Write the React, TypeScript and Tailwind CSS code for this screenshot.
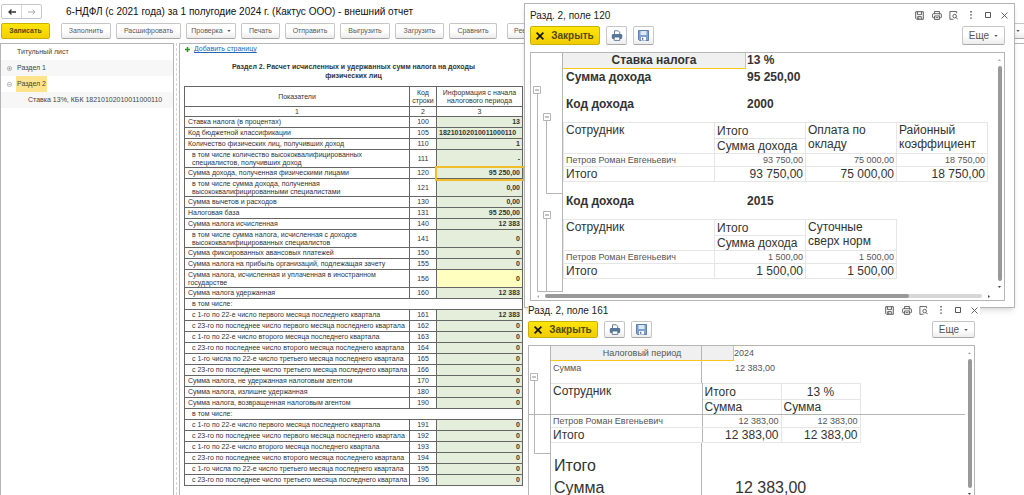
import type { ReactNode } from 'react';
import clsx from 'clsx';

type Tone = 'green' | 'yellow';

interface ReportRow {
  label: string;
  code?: string;
  value?: string;
  indent?: boolean;
  tall?: boolean;
  tone?: Tone;
  selected?: boolean;
}

const reportRows: ReportRow[] = [
  { label: 'Ставка налога (в процентах)', code: '100', value: '13' },
  { label: 'Код бюджетной классификации', code: '105', value: '18210102010011000110' },
  { label: 'Количество физических лиц, получивших доход', code: '110', value: '1' },
  { label: 'в том числе количество высококвалифицированных специалистов, получивших доход', code: '111', value: '-', indent: true, tall: true },
  { label: 'Сумма дохода, полученная физическими лицами', code: '120', value: '95 250,00', selected: true },
  { label: 'в том числе сумма дохода, полученная высококвалифицированными специалистами', code: '121', value: '0,00', indent: true, tall: true },
  { label: 'Сумма вычетов и расходов', code: '130', value: '0,00' },
  { label: 'Налоговая база', code: '131', value: '95 250,00' },
  { label: 'Сумма налога исчисленная', code: '140', value: '12 383' },
  { label: 'в том числе сумма налога, исчисленная с доходов высококвалифицированных специалистов', code: '141', value: '0', indent: true, tall: true },
  { label: 'Сумма фиксированных авансовых платежей', code: '150', value: '0' },
  { label: 'Сумма налога на прибыль организаций, подлежащая зачету', code: '155', value: '0' },
  { label: 'Сумма налога, исчисленная и уплаченная в иностранном государстве', code: '156', value: '0', tall: true, tone: 'yellow' },
  { label: 'Сумма налога удержанная', code: '160', value: '12 383' },
  { label: 'в том числе:', indent: true },
  { label: 'с 1-го по 22-е число первого месяца последнего квартала', code: '161', value: '12 383', indent: true },
  { label: 'с 23-го по последнее число первого месяца последнего квартала', code: '162', value: '0', indent: true },
  { label: 'с 1-го по 22-е число второго месяца последнего квартала', code: '163', value: '0', indent: true },
  { label: 'с 23-го по последнее число второго месяца последнего квартала', code: '164', value: '0', indent: true },
  { label: 'с 1-го числа по 22-е число третьего месяца последнего квартала', code: '165', value: '0', indent: true },
  { label: 'с 23-го по последнее число третьего месяца последнего квартала', code: '166', value: '0', indent: true },
  { label: 'Сумма налога, не удержанная налоговым агентом', code: '170', value: '0' },
  { label: 'Сумма налога, излишне удержанная', code: '180', value: '0' },
  { label: 'Сумма налога, возвращенная налоговым агентом', code: '190', value: '0' },
  { label: 'в том числе:', indent: true },
  { label: 'с 1-го по 22-е число первого месяца последнего квартала', code: '191', value: '0', indent: true },
  { label: 'с 23-го по последнее число первого месяца последнего квартала', code: '192', value: '0', indent: true },
  { label: 'с 1-го по 22-е число второго месяца последнего квартала', code: '193', value: '0', indent: true },
  { label: 'с 23-го по последнее число второго месяца последнего квартала', code: '194', value: '0', indent: true },
  { label: 'с 1-го числа по 22-е число третьего месяца последнего квартала', code: '195', value: '0', indent: true },
  { label: 'с 23-го по последнее число третьего месяца последнего квартала', code: '196', value: '0', indent: true },
];

const plainButton =
  'flex shrink-0 items-center justify-center rounded-xs border border-[#c6c6c6] border-b-[#a8a8a8] bg-linear-to-b from-white from-50% to-[#ececec] text-[#555]';

function Caret() {
  return (
    <svg viewBox="0 0 5 3" className="h-0.5 w-1 shrink-0" fill="#555">
      <path d="M0 0h5L2.5 3z" />
    </svg>
  );
}

function ToolButton({ children, className }: { children: ReactNode; className?: string }) {
  return <button className={clsx(plainButton, 'h-4 gap-1 text-[7px]', className)}>{children}</button>;
}

function Toolbar() {
  return (
    <div className="flex gap-[5px] overflow-hidden pt-1 pb-1 pl-px">
      <button className="mr-1.5 h-4 w-[49px] shrink-0 rounded-xs border border-[#c9b100] bg-linear-to-b from-[#ffe60a] to-[#f2cf00] text-[7px] font-bold text-[#554a00]">
        Записать
      </button>
      <ToolButton className="w-[50px]">Заполнить</ToolButton>
      <ToolButton className="w-[65px]">Расшифровать</ToolButton>
      <ToolButton className="w-[50px]">
        Проверка <Caret />
      </ToolButton>
      <ToolButton className="w-[39px]">Печать</ToolButton>
      <ToolButton className="w-[50px]">Отправить</ToolButton>
      <ToolButton className="w-[50px]">Выгрузить</ToolButton>
      <ToolButton className="w-[49px]">Загрузить</ToolButton>
      <ToolButton className="w-[48px]">Сравнить</ToolButton>
      <ToolButton className="ml-[5px] w-[42px]">Реестры</ToolButton>
      <ToolButton className="-mr-1 ml-auto w-[38px]">
        Еще <Caret />
      </ToolButton>
    </div>
  );
}

function Expander({ open }: { open: boolean }) {
  return (
    <svg viewBox="0 0 7 7" className="size-[5px]" fill="none" stroke="#888">
      <circle cx="3.5" cy="3.5" r="3" strokeWidth="0.8" />
      <path d={open ? 'M2 3.5h3' : 'M2 3.5h3M3.5 2v3'} strokeWidth="0.9" />
    </svg>
  );
}

function SectionTree() {
  return (
    <nav className="w-[174px] shrink-0 border-x border-t border-[#b5b5b5] text-[7px] leading-4 text-[#444]">
      <ul>
        <li className="pl-4">Титульный лист</li>
        <li className="flex items-center gap-[5px] bg-[#f7f7f7] pl-[6px]">
          <Expander open={false} />
          Раздел 1
        </li>
        <li className="flex items-center gap-1 pl-[6px]">
          <Expander open />
          <span className="bg-[#ffe48c] px-px">Раздел 2</span>
        </li>
        <li className="bg-[#f7f7f7] pl-[27px] whitespace-nowrap">Ставка 13%, КБК 18210102010011000110</li>
      </ul>
    </nav>
  );
}

function ReportTable() {
  return (
    <table className="w-[339px] table-fixed border-collapse text-[7px] leading-[8px] text-[#333] [&_td]:border [&_td]:border-[#666] [&_td]:p-0 [&_th]:border [&_th]:border-[#666] [&_th]:p-0 [&_th]:font-normal">
      <colgroup>
        <col className="w-[225px]" />
        <col className="w-[27px]" />
        <col />
      </colgroup>
      <thead>
        <tr className="h-5">
          <th>Показатели</th>
          <th>Код строки</th>
          <th>Информация с начала налогового периода</th>
        </tr>
        <tr className="h-[10px]">
          <th>1</th>
          <th>2</th>
          <th>3</th>
        </tr>
      </thead>
      <tbody>
        {reportRows.map((row, i) => (
          <tr key={i} className={row.tall ? 'h-[18px]' : 'h-[11px]'}>
            <td colSpan={row.code ? 1 : 3}>
              <div className={row.indent ? 'pr-7 pl-[7px]' : 'pr-6 pl-[3px]'}>
                <span className={row.tall ? undefined : 'whitespace-nowrap'}>{row.label}</span>
              </div>
            </td>
            {row.code && <td className="text-center">{row.code}</td>}
            {row.code && (
              <td
                className={clsx(
                  'text-right font-bold',
                  row.tone === 'yellow' ? 'bg-[#ffffbf]' : 'bg-[#e4eedb]',
                  row.selected && 'outline-2 outline-[#f0bd2c]',
                )}
              >
                <div className={row.code === '105' ? 'pl-0.5 text-left' : 'pr-0.5'}>{row.value}</div>
              </td>
            )}
          </tr>
        ))}
      </tbody>
    </table>
  );
}

function SaveGlyph() {
  return (
    <svg viewBox="0 0 10 10" className="size-[9px]" fill="none" stroke="#444">
      <path d="M.8.8h8.4v8.4H1.8L.8 8.2z" />
      <path d="M2.8 1v3h4.4V1M3 9V6.2h4V9M4.2 7v2" strokeWidth="0.9" />
    </svg>
  );
}

function PrintGlyph() {
  return (
    <svg viewBox="0 0 11 10" className="h-[9px] w-[10px]" fill="none" stroke="#444" strokeWidth="0.9">
      <path d="M2.8 3V.6h5.4V3M2.6 7.5H1.2Q.6 7.5.6 6.9V3.8Q.6 3 1.4 3h8.2q.8 0 .8.8v3.1q0 .6-.6.6H8.4" />
      <path d="M2.8 5.5h5.4v3.9H2.8zM4 7.4h3M8 4.3h1" />
    </svg>
  );
}

function PreviewGlyph() {
  return (
    <svg viewBox="0 0 10 10" className="size-[9px]" fill="none" stroke="#444" strokeWidth="0.9">
      <path d="M8.5 2.5V.6H1v8.6h4" />
      <circle cx="6.3" cy="5.7" r="2" />
      <path d="M7.8 7.2l1.8 2" />
    </svg>
  );
}

function WindowGlyphs() {
  const glyphs: [string, ReactNode][] = [
    ['Сохранить', <SaveGlyph />],
    ['Печать', <PrintGlyph />],
    ['Просмотр', <PreviewGlyph />],
    [
      'Меню',
      <svg viewBox="0 0 2 8" className="h-2 w-0.5" fill="#444">
        <path d="M.3 0h1.4v1.4H.3zM.3 3.2h1.4v1.4H.3zM.3 6.4h1.4v1.4H.3z" />
      </svg>,
    ],
    [
      'Развернуть',
      <svg viewBox="0 0 6 6" className="size-1.5" fill="none" stroke="#555">
        <path d="M.5.5h5v5h-5z" />
      </svg>,
    ],
    [
      'Закрыть',
      <svg viewBox="0 0 7 7" className="size-[7px]" fill="none" stroke="#555" strokeWidth="0.9">
        <path d="M.5.5l6 6M6.5.5l-6 6" />
      </svg>,
    ],
  ];
  return (
    <div className="-mr-2 flex">
      {glyphs.map(([title, icon]) => (
        <button key={title} aria-label={title} className="flex h-3 w-[17px] items-center justify-center">
          {icon}
        </button>
      ))}
    </div>
  );
}

function WindowHeader({ title }: { title: string }) {
  return (
    <>
      <div className="flex h-[14px] items-center justify-between">
        <h2 className="text-[10px] text-[#222]">{title}</h2>
        <WindowGlyphs />
      </div>
      <div className="mt-1 mb-[7px] flex h-[19px] gap-1.5">
        <button className="flex w-[70px] items-center justify-center gap-[7px] rounded-xs border border-[#c9b100] bg-linear-to-b from-[#ffe60a] to-[#f0cb00] text-[10px] font-bold text-[#554a00]">
          <svg viewBox="0 0 8 8" className="size-2" stroke="#111" strokeWidth="1.6">
            <path d="M.6.6l6.8 6.8M7.4.6L.6 7.4" />
          </svg>
          Закрыть
        </button>
        <button aria-label="Печать" className={clsx(plainButton, 'w-[21px]')}>
          <svg viewBox="0 0 12 11" className="h-[11px] w-3">
            <path d="M3.5 4V.8h3.8l1.4 1.4V4" fill="#fff" stroke="#56708c" strokeWidth="0.9" />
            <rect x="0.8" y="4" width="10.4" height="5" rx="1.2" fill="#56769a" />
            <path d="M3.2 7h5.6v3.4H3.2z" fill="#fff" stroke="#56708c" strokeWidth="0.9" />
          </svg>
        </button>
        <button aria-label="Сохранить" className={clsx(plainButton, 'w-[21px]')}>
          <svg viewBox="0 0 11 11" className="size-[11px]">
            <path d="M.5.5h10v10H1.5l-1-1z" fill="#7da2cf" stroke="#5b7fae" />
            <path d="M2.5 1h6v4h-6z" fill="#dce8f6" />
            <path d="M3 7h5v3.5H3z" fill="#fff" />
            <path d="M4 7.8h1.3v2H4z" fill="#4b6c98" />
          </svg>
        </button>
        <button className={clsx(plainButton, 'ml-auto w-[43px] gap-[5px] text-[10px]')}>
          Еще <Caret />
        </button>
      </div>
    </>
  );
}

function VerticalScroll() {
  return (
    <div className="flex w-[9px] shrink-0 flex-col items-center pt-1.5 pb-1">
      <svg viewBox="0 0 3 2" className="h-0.5 w-[3px]" fill="#aaa">
        <path d="M0 2h3L1.5 0z" />
      </svg>
      <div className="my-[5px] w-1 flex-1 rounded-full bg-[#999]" />
      <svg viewBox="0 0 3 2" className="h-0.5 w-[3px]" fill="#444">
        <path d="M0 0h3L1.5 2z" />
      </svg>
    </div>
  );
}

function HorizontalScroll() {
  return (
    <div className="flex h-2 items-center gap-1.5 pr-[14px] pl-1.5">
      <svg viewBox="0 0 2 3" className="h-[3px] w-0.5" fill="#aaa">
        <path d="M2 0v3L0 1.5z" />
      </svg>
      <div className="h-1 flex-1 rounded-full bg-[#d6d6d6]">
        <div className="h-1 w-5/6 rounded-full bg-[#999]" />
      </div>
      <svg viewBox="0 0 2 3" className="h-[3px] w-0.5" fill="#444">
        <path d="M0 0v3l2-1.5z" />
      </svg>
    </div>
  );
}

interface IncomeTable {
  code: string;
  kinds: string[];
  values: string[];
}

const incomeTables: IncomeTable[] = [
  { code: '2000', kinds: ['Оплата по окладу', 'Районный коэффициент'], values: ['93 750,00', '75 000,00', '18 750,00'] },
  { code: '2015', kinds: ['Суточные сверх норм'], values: ['1 500,00', '1 500,00'] },
];

const gridTable =
  'table-fixed border-collapse text-left text-[12px] leading-[14px] [&_td]:border [&_td]:border-[#e6e6e6] [&_td]:px-0.5 [&_td]:py-0 [&_th]:border [&_th]:border-[#e6e6e6] [&_th]:px-0.5 [&_th]:py-0 [&_th]:font-normal';

function IncomeSection({ code, kinds, values }: IncomeTable) {
  return (
    <section>
      <h3 className="flex h-[37px] items-center pl-[3px] font-bold">
        <span className="w-[181px]">Код дохода</span>
        {code}
      </h3>
      <table className={gridTable}>
        <thead>
          <tr className="h-4">
            <th rowSpan={2} className="w-[151px] align-top">
              Сотрудник
            </th>
            <th className="w-[91px]">Итого</th>
            {kinds.map((kind) => (
              <th key={kind} rowSpan={2} className="w-[91px] align-top">
                {kind}
              </th>
            ))}
          </tr>
          <tr className="h-[15px]">
            <th>Сумма дохода</th>
          </tr>
        </thead>
        <tbody>
          <tr className="h-[13px] text-[9px] leading-[12px] text-[#555]">
            <td>Петров Роман Евгеньевич</td>
            {values.map((v, i) => (
              <td key={i} className="text-right">
                {v}
              </td>
            ))}
          </tr>
          <tr className="h-[15px]">
            <td>Итого</td>
            {values.map((v, i) => (
              <td key={i} className="text-right">
                {v}
              </td>
            ))}
          </tr>
        </tbody>
      </table>
    </section>
  );
}

function Field120Window() {
  return (
    <section className="absolute top-[3px] right-[9px] w-[491px] border border-[#b5b5b5] bg-white pt-1 pr-[9px] pb-1.5 pl-[5px] shadow-md">
      <WindowHeader title="Разд. 2, поле 120" />
      <div className="border border-[#b5b5b5]">
        <div className="flex">
          <svg viewBox="0 0 31 239" className="h-[239px] w-[31px] shrink-0" fill="none" stroke="#b5b5b5">
            <path d="M6.5 41v197.5H31M15.5 68v72.5H31M15.5 166v72" />
            <path d="M2.5 33.5h7v7h-7zM12.5 60.5h7v7h-7zM12.5 158.5h7v7h-7z" fill="#fff" />
            <path d="M4 37h4M14 64h4M14 162h4" stroke="#888" />
          </svg>
          <div className="flex-1 border-l border-[#b5b5b5] text-[12px] leading-4 text-[#333]">
            <dl className="grid grid-cols-[183px_1fr] font-bold">
              <dt className="border-r border-b border-r-[#f8c81e] border-b-[#f8c81e] bg-[#f0f0f0] text-center leading-[15px]">
                Ставка налога
              </dt>
              <dd className="pl-px leading-[15px]">13 %</dd>
              <dt className="pl-[3px]">Сумма дохода</dt>
              <dd className="pl-px">95 250,00</dd>
            </dl>
            {incomeTables.map((t) => (
              <IncomeSection key={t.code} {...t} />
            ))}
          </div>
          <VerticalScroll />
        </div>
        <HorizontalScroll />
      </div>
    </section>
  );
}

function Field161Window() {
  return (
    <section className="absolute top-[303px] right-[44px] bottom-0 flex w-[452px] flex-col overflow-hidden bg-white pr-[5px]">
      <WindowHeader title="Разд. 2, поле 161" />
      <div className="flex flex-1 border border-b-0 border-[#b5b5b5]">
        <svg viewBox="0 0 21 150" className="h-[150px] w-[21px] shrink-0" fill="none" stroke="#b5b5b5">
          <path d="M5.5 35v72.5H21M0 68.5h21" />
          <path d="M1.5 27.5h7v7h-7z" fill="#fff" />
          <path d="M3 31h4" stroke="#888" />
        </svg>
        <div className="flex-1 border-l border-[#b5b5b5] text-[#333]">
          <dl className="grid grid-cols-[151px_32px_1fr] text-[9px] leading-[14px] text-[#555]">
            <dt className="col-span-2 border-r border-b border-r-[#f8c81e] border-b-[#f8c81e] bg-[#f0f0f0]">
              <div className="w-[151px] border-r border-[#b5b5b5] pl-8 text-center">Налоговый период</div>
            </dt>
            <dd>2024</dd>
            <dt className="h-[22px] border-r border-[#b5b5b5] pl-0.5">Сумма</dt>
            <dd className="col-span-2 pl-[33px]">12 383,00</dd>
          </dl>
          <table className={clsx(gridTable, 'w-full [&_tr>*:first-child]:border-l-0')}>
            <thead>
              <tr className="h-4">
                <th rowSpan={2} className="w-[151px] border-r-[#b5b5b5]! border-b-[#b5b5b5]! align-top">
                  Сотрудник
                </th>
                <th className="w-[79px]">Итого</th>
                <th className="w-[79px]">
                  <div className="text-center">13 %</div>
                </th>
                <td rowSpan={2} className="border-0! border-b! border-b-[#b5b5b5]!" />
              </tr>
              <tr className="h-[15px]">
                <th className="border-b-[#b5b5b5]! border-l-[#b5b5b5]!">Сумма</th>
                <th className="border-b-[#b5b5b5]!">Сумма</th>
              </tr>
            </thead>
            <tbody>
              <tr className="h-[13px] text-[9px] leading-[12px] text-[#555]">
                <td className="border-t-[#b5b5b5]! border-r-[#b5b5b5]!">Петров Роман Евгеньевич</td>
                <td className="border-t-[#b5b5b5]! text-right">12 383,00</td>
                <td className="border-t-[#b5b5b5]! text-right">12 383,00</td>
                <td className="border-0!" />
              </tr>
              <tr className="h-[15px]">
                <td className="border-r-[#b5b5b5]!">Итого</td>
                <td className="text-right">12 383,00</td>
                <td className="text-right">12 383,00</td>
                <td className="border-0!" />
              </tr>
            </tbody>
          </table>
          <dl className="grid grid-cols-[151px_1fr] text-[16px] leading-[22px]">
            <dt className="border-r border-[#b5b5b5] pt-3 pl-[3px]">Итого</dt>
            <dd />
            <dt className="border-r border-[#b5b5b5] pl-[3px]">Сумма</dt>
            <dd className="pl-[33px]">12 383,00</dd>
          </dl>
        </div>
        <VerticalScroll />
      </div>
    </section>
  );
}

export default function App() {
  return (
    <div className="relative flex h-screen flex-col overflow-hidden bg-white font-['Liberation_Sans',Arial,sans-serif]">
      <header className="flex h-[19px] items-end gap-6 pl-px">
        <div className="flex h-[15px] w-[41px] rounded-xs border border-[#c6c6c6]">
          <button aria-label="Назад" className="flex flex-1 items-center justify-center border-r border-[#d6d6d6]">
            <svg viewBox="0 0 8 6" className="h-1.5 w-2" fill="none" stroke="#333" strokeWidth="1.3">
              <path d="M8 3H1M3.5.5L1 3l2.5 2.5" />
            </svg>
          </button>
          <button aria-label="Вперед" className="flex flex-1 items-center justify-center">
            <svg viewBox="0 0 8 6" className="h-1.5 w-2" fill="none" stroke="#aaa">
              <path d="M0 3h7M4.5.5L7 3 4.5 5.5" />
            </svg>
          </button>
        </div>
        <h1 className="text-[10px] leading-[15px] text-[#111]">
          6-НДФЛ (с 2021 года) за 1 полугодие 2024 г. (Кактус ООО) - внешний отчет
        </h1>
      </header>
      <Toolbar />
      <div className="flex min-h-0 flex-1">
        <SectionTree />
        <div className="w-[5px] shrink-0">
          <div className="mx-auto h-full w-px border-l border-dashed border-[#d6d6d6]" />
        </div>
        <main className="flex-1 overflow-hidden border-t border-l border-[#b5b5b5] pl-1">
          <div className="flex h-[11px] items-center gap-1 pl-px text-[7px]">
            <svg viewBox="0 0 5 5" className="size-[5px]" stroke="#1f9a1f" strokeWidth="1.5">
              <path d="M0 2.5h5M2.5 0v5" />
            </svg>
            <a href="#add-page" className="text-[#2a66b8] underline">
              Добавить страницу
            </a>
          </div>
          <h2 className="flex h-[31px] w-[339px] items-center justify-center px-9 text-center text-[7px] leading-[9px] font-bold text-[#333]">
            Раздел 2. Расчет исчисленных и удержанных сумм налога на доходы физических лиц
          </h2>
          <ReportTable />
        </main>
      </div>
      <Field120Window />
      <Field161Window />
    </div>
  );
}
